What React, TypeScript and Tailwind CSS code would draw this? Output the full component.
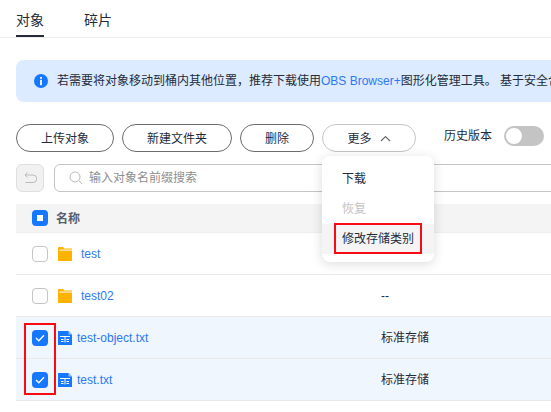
import React from "react";

const font = "[font-family:'Liberation_Sans','Noto_Sans_CJK_SC',sans-serif]";

function Pill({ label, w }: { label: string; w: string }) {
  return (
    <button className={`${w} h-7 shrink-0 rounded-full border border-[#6c6c6c] bg-white pt-px text-xs text-[#252b3a]`}>
      {label}
    </button>
  );
}

function Folder() {
  return (
    <svg width="14" height="14" viewBox="0 0 14 14" className="shrink-0">
      <path d="M0 1a1 1 0 0 1 1-1h4l1.5 1.6H14V14H0z" fill="#ffb300" />
      <rect x="1.5" y="2.6" width="12.5" height="1" fill="#fff" />
    </svg>
  );
}

function FileIcon() {
  return (
    <svg width="14" height="14" viewBox="0 0 14 14" className="shrink-0">
      <path d="M0 0h10.5L14 3.5V14H0z" fill="#1677ff" />
      <path d="M10.5 0L14 3.5h-3.5z" fill="#8fc0ff" />
      <path d="M2 5h10v1H2zM6.5 6h1v5.5h-1zM3 8h2.5v1H3zM3 10h2.5v1H3zM8.5 8H11v1H8.5zM8.5 10H11v1H8.5z" fill="#fff" />
    </svg>
  );
}

function Box({ checked }: { checked?: boolean }) {
  if (checked)
    return (
      <span className="flex h-4 w-4 shrink-0 items-center justify-center rounded bg-[#1677ff]">
        <svg width="10" height="8" viewBox="0 0 10 8" fill="none">
          <path d="M1 4l2.8 2.8L9 1.2" stroke="#fff" strokeWidth="1.3" />
        </svg>
      </span>
    );
  return <span className="h-4 w-4 shrink-0 rounded border border-[#c4c4c4] bg-white" />;
}

function Row({ name, kind, storage, selected, h }: { name: string; kind: "folder" | "file"; storage: string; selected?: boolean; h: string }) {
  return (
    <div className={`flex ${h} items-center border-b border-[#e9e9e9] pl-4 ${selected ? "bg-[#eff6fd]" : "bg-white"}`}>
      <Box checked={selected} />
      <span className="ml-2.5">{kind === "folder" ? <Folder /> : <FileIcon />}</span>
      <span className={`${kind === "folder" ? "ml-[9px] w-[300px]" : "ml-[5px] w-[304px]"} text-xs text-[#2e78f2]`}>{name}</span>
      <span className="text-xs text-[#252b3a]">{storage}</span>
    </div>
  );
}

export default function App() {
  return (
    <div className={`relative h-[412px] w-[551px] overflow-hidden bg-white ${font}`}>
      <div className="flex h-[38px] items-end gap-10 border-b border-[#eeeeee] pl-4">
        <div className="flex h-[27px] w-7 flex-col justify-between text-sm leading-5 text-[#252b3a]">
          <span className="whitespace-nowrap">对象</span>
          <span className="h-0.5 w-7 bg-[#252b3a]" />
        </div>
        <div className="h-[27px] text-sm leading-5 text-[#252b3a]">碎片</div>
      </div>

      <div className="ml-4 mt-[22px] flex h-[42px] w-[600px] items-center rounded-lg bg-[#dcebff] pl-[18px] text-xs whitespace-nowrap text-[#252b3a]">
        <svg width="14" height="14" viewBox="0 0 14 14" className="mr-[9px] shrink-0">
          <circle cx="7" cy="7" r="7" fill="#1677ff" />
          <rect x="6.1" y="3" width="1.8" height="1.8" fill="#fff" />
          <rect x="6.1" y="5.8" width="1.8" height="5.4" fill="#fff" />
        </svg>
        <span>
          若需要将对象移动到桶内其他位置，推荐下载使用<span className="text-[#2e78f2]">OBS Browser+</span>图形化管理工具。 基于安全合规要求
        </span>
      </div>

      <div className="mt-[22px] flex h-7 items-center pl-4">
        <div className="flex gap-2">
          <Pill label="上传对象" w="w-[98px]" />
          <Pill label="新建文件夹" w="w-[110px]" />
          <Pill label="删除" w="w-[74px]" />
          <button className="flex h-7 w-[94px] shrink-0 items-center justify-center gap-2 rounded-full border border-[#c4c4c4] bg-white pt-px text-xs text-[#252b3a]">
            更多
            <svg width="11" height="7" viewBox="0 0 11 7" fill="none">
              <path d="M1 6l4.5-4.5L10 6" stroke="#6c6c6c" strokeWidth="1.2" />
            </svg>
          </button>
        </div>
        <span className="ml-7 -mt-1 text-xs text-[#252b3a]">历史版本</span>
        <span className="ml-3 -mt-1 flex h-5 w-10 items-center rounded-full bg-[#c4c4c4] pl-0.5">
          <span className="h-4 w-4 rounded-full bg-white" />
        </span>
      </div>

      <div className="mt-3 flex h-7 gap-2.5 pl-4">
        <div className="flex h-7 w-7 shrink-0 items-center justify-center rounded-md border border-[#dfdfdf] bg-[#f1f1f1]">
          <svg width="13" height="12" viewBox="0 0 13 12" fill="none">
            <path d="M3.5 0.5L1 3l2.5 2.5M1 3h8a3.5 3.5 0 0 1 0 7.5H1.5" stroke="#bbbbbb" strokeWidth="1" />
          </svg>
        </div>
        <div className="flex h-7 w-[600px] shrink-0 items-center rounded-md border border-[#c4c4c4] bg-white pl-3.5 text-xs text-[#8f8f8f]">
          <svg width="14" height="14" viewBox="0 0 14 14" fill="none" className="mr-1.5">
            <circle cx="6" cy="6" r="5" stroke="#b8b8b8" strokeWidth="1" />
            <path d="M9.6 9.6L13 13" stroke="#b8b8b8" strokeWidth="1" />
          </svg>
          输入对象名前缀搜索
        </div>
      </div>

      <div className="ml-4 mt-3">
        <div className="flex h-[29px] items-center border-b border-[#eeeeee] bg-[#f4f4f4] pl-4">
          <span className="flex h-4 w-4 items-center justify-center rounded bg-[#1677ff]">
            <span className="h-1.5 w-1.5 bg-white" />
          </span>
          <span className="ml-2 pt-0.5 text-xs font-bold text-[#575d6c]">名称</span>
        </div>
        <Row name="test" kind="folder" storage="" h="h-[42px]" />
        <Row name="test02" kind="folder" storage="--" h="h-[42px]" />
        <Row name="test-object.txt" kind="file" storage="标准存储" selected h="h-[42px]" />
        <Row name="test.txt" kind="file" storage="标准存储" selected h="h-[42px]" />
      </div>

      <div className="absolute left-[322px] top-[156px] h-[106px] w-28 rounded-lg bg-white pt-2 text-xs shadow-[0_2px_12px_rgba(0,0,0,0.14)]">
        <div className="flex h-[30px] items-center pl-5 text-[#252b3a]">下载</div>
        <div className="flex h-[30px] items-center pl-5 text-[#c4c4c4]">恢复</div>
        <div className="flex h-[30px] items-center bg-[#f4f4f4] pl-5 text-[#252b3a]">修改存储类别</div>
      </div>

      <div className="absolute left-[334px] top-[223px] h-[31px] w-[88px] border-2 border-[#fa0a14]" />
      <div className="absolute left-6 top-[323px] h-[72px] w-[32px] border-2 border-[#fa0a14]" />
    </div>
  );
}
